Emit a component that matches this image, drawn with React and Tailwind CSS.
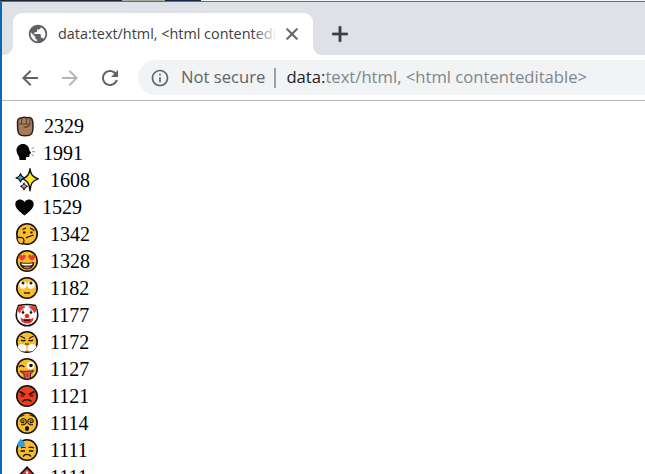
import React from "react";

const Face = ({ fill = "#fbbc2c", children }) => (
  <svg width="24" height="24" viewBox="0 0 24 24" className="shrink-0">
    <circle cx="12" cy="12" r="10.2" fill={fill} stroke="#111" strokeWidth="1.6" />
    {children}
  </svg>
);

const Raw = ({ children }) => (
  <svg width="24" height="24" viewBox="0 0 24 24" className="shrink-0">{children}</svg>
);

const emojis = {
  fist: (
    <Raw>
      <path d="M2.500 8C2.500 5 4.500 3.800 6.500 4 8 3.200 10.500 3.200 12 3.800c2-.7 4-.2 5 1.300.9 1.800 1 4.300 1 7 0 4 .2 5.500-1.300 7.500-1.400 1.800-3.500 2.200-6.700 2.200-3.500 0-5.500-.8-6.500-2.800C2.700 17 2.500 12.500 2.500 8z" fill="#a67c5a" stroke="#2b2118" strokeWidth="1.500" />
      <path d="M6.500 4.500V9.500M11.500 4V9.500M15 4.500V9.500M3.500 10H15C14.500 12 12 13.200 8.500 13.200" fill="none" stroke="#5d4430" strokeWidth="1.100" />
    </Raw>
  ),
  head: (
    <Raw>
      <path d="M1.500 9.500C1.500 5.500 4.500 3 8 3c3.500 0 6 2.500 6.200 5.500 0 1 1.800 2.800 1.800 3.500 0 .7-1.300.9-1.500 1.300.2.900.2 1.700-.3 2.200-.8.800-2.200.4-3 .8-.4.800-.3 1.700-.3 2.700H4.500c0-2-.4-3.500-1.500-5C2 12.500 1.500 11 1.500 9.500z" fill="#050505" />
      <path d="M16.500 8L19 6.300M17 10.700H20M16.500 13.300L19 15" fill="none" stroke="#8d8d96" strokeWidth="1" />
    </Raw>
  ),
  sparkles: (
    <svg width="24" height="24" viewBox="0 0 24 24" className="shrink-0">
      <path d="M15 0.800C15.800 6.500 17.500 9 23.300 10.800 17.500 12.700 15.800 15 15 22.800 14.200 15 12.500 12.700 7.500 10.800 12.500 9 14.200 6.500 15 0.800z" fill="#ffe81f" stroke="#111" strokeWidth="1.400" strokeLinejoin="round" />
      <path d="M5.500 5.500C6 8 7 9 9.500 9.800 7 10.500 6 11.500 5.500 14 5 11.500 4 10.500 1 9.800 4 9 5 8 5.500 5.500z" fill="#2cb5d8" stroke="#111" strokeWidth="1.200" strokeLinejoin="round" />
      <path d="M9 15C9.400 17 10 17.600 12.300 18.300 10 19 9.400 19.700 9 22 8.600 19.700 8 19 5.700 18.300 8 17.600 8.600 17 9 15z" fill="#ea8bbd" stroke="#111" strokeWidth="1.100" strokeLinejoin="round" />
    </svg>
  ),
  heart: (
    <Raw>
      <path d="M9.500 20.500C5 17 .3 13.500.3 9.300.3 6 2.700 4.500 5 4.500 7 4.500 8.700 5.500 9.500 7.200 10.300 5.500 12 4.500 14 4.500 16.300 4.500 18.700 6 18.700 9.300 18.700 13.500 14 17 9.500 20.500z" fill="#050505" />
    </Raw>
  ),
  thinking: (
    <Face>
      <path d="M7.500 7.500L11 6M15 6L19.500 8.500" fill="none" stroke="#111" strokeWidth="1.300" />
      <path d="M8 10.500h2.500M15.500 10.500h2" fill="none" stroke="#111" strokeWidth="1.800" />
      <path d="M11 15.800C13.500 14.500 16 14 18.500 13" fill="none" stroke="#111" strokeWidth="1.300" />
      <path d="M1.800 16C3.500 15 7 15.200 8 16.200 9.300 17.800 9 20.500 7.500 22.200L4.500 21.500C3 20 2 18 1.800 16z" fill="#fbbc2c" stroke="#111" strokeWidth="1.200" />
    </Face>
  ),
  hearts: (
    <Face>
      <path d="M7 11.800C4.500 10 3.200 8.500 3.700 6.800 4.300 5.300 6.300 5.300 7.200 7 8.100 5.300 10.200 5.300 10.700 6.800 11.200 8.500 9.500 10 7 11.800z" fill="#ea3d2f" />
      <path d="M17 11.800C14.500 10 12.800 8.500 13.300 6.800 13.900 5.300 15.900 5.300 16.800 7 17.700 5.300 19.800 5.300 20.300 6.800 20.800 8.500 19.500 10 17 11.800z" fill="#ea3d2f" />
      <path d="M5.300 13.500C8 14.500 16 14.500 18.700 13.500 18.700 17.500 16 20 12 20 8 20 5.300 17.500 5.300 13.500z" fill="#3a1a10" stroke="#111" strokeWidth=".8" />
      <path d="M6.500 14.200C9 14.900 15 14.900 17.500 14.200L17 16C14 16.700 10 16.700 7 16z" fill="#fff" />
      <path d="M8.500 18.500C10 17.300 14 17.300 15.500 18.500 14 19.700 10 19.700 8.500 18.500z" fill="#e8603c" />
    </Face>
  ),
  roll: (
    <Face>
      <circle cx="8" cy="9" r="3.700" fill="#fff" />
      <circle cx="16" cy="9" r="3.700" fill="#fff" />
      <circle cx="8" cy="7" r="1.500" fill="#222" />
      <circle cx="16" cy="7" r="1.500" fill="#222" />
      <path d="M9 17H15" stroke="#111" strokeWidth="1.300" />
    </Face>
  ),
  clown: (
    <Raw>
      <path d="M3.500 2.500C6 2 8.500 1.500 12 1.500s6 .5 8.500 1C22 6 22.800 9 22.800 12c0 6-4.800 10.800-10.800 10.800S1.200 18 1.200 12c0-3 .8-6 2.300-9.500z" fill="#fdfdfd" stroke="#111" strokeWidth="1.500" />
      <path d="M3 3.500C6 2.600 9 2.800 11 4 8 5 6 7 5 10 3 9.500 2 7 3 3.500zM21 3.500C18 2.600 15 2.800 13 4 16 5 18 7 19 10 21 9.500 22 7 21 3.500z" fill="#e03c31" />
      <path d="M8 9V6M16 9V6" stroke="#4fa5dd" strokeWidth="1.200" />
      <circle cx="8" cy="9.500" r="1.300" fill="#111" />
      <circle cx="16" cy="9.500" r="1.300" fill="#111" />
      <circle cx="12" cy="13" r="2.300" fill="#e6312a" />
      <path d="M5.500 14.500C7 16 8.500 16 9.500 15.500 11 16.200 13 16.200 14.500 15.500 15.500 16 17 16 18.500 14.500 18.500 18.500 15.500 20.500 12 20.500 8.500 20.500 5.500 18.500 5.500 14.500z" fill="#e6312a" />
      <path d="M9 17.300H15" stroke="#4a0f0a" strokeWidth="1.500" />
    </Raw>
  ),
  steam: (
    <Face>
      <path d="M5.500 6L10 8.500M18.500 6L14 8.500M6 10C7.500 11.200 9 11.200 10.500 10M13.500 10C15 11.200 16.500 11.200 18 10M10 14H14" fill="none" stroke="#111" strokeWidth="1.200" />
      <path d="M2.500 17C3.500 14.500 6 13.500 8 14.500 10 14.500 11.500 16 11.500 18.500 11.500 19.500 11 20.800 10 21.500 7 22 4 20 2.500 17zM21.500 17C20.500 14.500 18 13.500 16 14.500 14 14.500 12.500 16 12.500 18.500 12.500 19.500 13 20.800 14 21.500 17 22 20 20 21.500 17z" fill="#fff" />
    </Face>
  ),
  wink: (
    <Face>
      <path d="M4 10C5.500 8 7.500 8 9.300 10" fill="none" stroke="#111" strokeWidth="1.400" />
      <circle cx="15.500" cy="8.500" r="3.800" fill="#fff" />
      <circle cx="16" cy="8.500" r="1.800" fill="#111" />
      <path d="M5 14C9 14.500 14 14.500 18.500 13.500 18 15 17 16 15.500 16.700V20C15.500 21.500 13.800 22.500 12 22.300 10 22 9 21 9 19.500V16.500C7 16 5.500 15 5 14z" fill="#e0504a" stroke="#111" strokeWidth=".8" />
      <path d="M12.300 17V20" stroke="#a82a2a" strokeWidth="1" />
    </Face>
  ),
  angry: (
    <Face fill="#e8401c">
      <path d="M4.500 7.500L10 10.500M19.500 7.500L14 10.500" stroke="#111" strokeWidth="1.800" />
      <ellipse cx="7.500" cy="11.500" rx="2" ry="1.500" fill="#8a1a10" />
      <ellipse cx="16.500" cy="11.500" rx="2" ry="1.500" fill="#8a1a10" />
      <path d="M7.500 17.500C9.500 15.300 14.500 15.300 16.500 17.500" fill="none" stroke="#111" strokeWidth="1.500" />
    </Face>
  ),
  dizzy: (
    <Face>
      <path d="M5 5.500L9.500 4M19 5.500L14.500 4" stroke="#111" strokeWidth="1" />
      <path d="M7.500 10c.9-.7 1.800.2 1.300 1.100-.6 1-2.400.7-2.900-.6-.5-1.500 1-3 2.800-2.700 1.900.3 3 2 2.400 3.900-.6 1.700-3 2.600-5 1.800" fill="none" stroke="#111" strokeWidth="1.100" />
      <path d="M16.500 10c-.9-.7-1.800.2-1.300 1.100.6 1 2.400.7 2.900-.6.500-1.500-1-3-2.800-2.700-1.900.3-3 2-2.400 3.900.6 1.700 3 2.600 5 1.800" fill="none" stroke="#111" strokeWidth="1.100" />
      <ellipse cx="12" cy="17.500" rx="2" ry="2.500" fill="#111" />
    </Face>
  ),
  sweat: (
    <Face>
      <path d="M13.500 9.500C15 9 17 9 19 10M6 10C7.500 9 8.500 9 10.500 9.500" fill="none" stroke="#111" strokeWidth="1.200" />
      <path d="M5.500 13H10M14 13H18.500" stroke="#111" strokeWidth="1.500" />
      <path d="M8 18.500C10 15.700 14 15.700 16 18.500" fill="none" stroke="#111" strokeWidth="1.400" />
      <path d="M5.500 0.500C7 2.500 10 4 10 6.300 10 8 8.300 9 6 9 3.800 9 2.300 8 2.300 6.300 2.300 4.300 4.500 3 5.500 .5z" fill="#2e9fe0" />
    </Face>
  ),
  house: (
    <Raw>
      <path d="M12 2L19 9.500H16.500V16H7.500V9.500H5z" fill="#d8362f" stroke="#111" strokeWidth="1.500" />
      <circle cx="12" cy="7.500" r="1.200" fill="#fff" />
    </Raw>
  ),
};

const rows = [
  ["fist", "2329", "ml-[5px]"],
  ["head", "1991", "ml-[4px]"],
  ["sparkles", "1608", "ml-[11px]"],
  ["heart", "1529", "ml-[3px]"],
  ["thinking", "1342", "ml-[11px]"],
  ["hearts", "1328", "ml-[11px]"],
  ["roll", "1182", "ml-[11px]"],
  ["clown", "1177", "ml-[11px]"],
  ["steam", "1172", "ml-[11px]"],
  ["wink", "1127", "ml-[11px]"],
  ["angry", "1121", "ml-[11px]"],
  ["dizzy", "1114", "ml-[11px]"],
  ["sweat", "1111", "ml-[11px]"],
  ["house", "1111", "ml-[11px]"],
];

const Icon = ({ d, size = 24, color = "#5f6368", bold = 0 }) => (
  <svg width={size} height={size} viewBox="0 0 24 24" fill={color} stroke={color} strokeWidth={bold} className="shrink-0">
    <path d={d} />
  </svg>
);

const icons = {
  globe: "M12 2C6.480 2 2 6.480 2 12s4.480 10 10 10 10-4.480 10-10S17.520 2 12 2zm-1 17.930c-3.950-.490-7-3.850-7-7.930 0-.620.080-1.210.210-1.790L9 15v1c0 1.100.9 2 2 2v1.930zm6.900-2.540c-.260-.810-1-1.390-1.900-1.390h-1v-3c0-.550-.450-1-1-1H8v-2h2c.550 0 1-.450 1-1V7h2c1.100 0 2-.9 2-2v-.410c2.930 1.190 5 4.060 5 7.410 0 2.080-.8 3.970-2.100 5.390z",
  close: "M19 6.410L17.590 5 12 10.590 6.410 5 5 6.410 10.590 12 5 17.590 6.410 19 12 13.410 17.590 19 19 17.590 13.410 12z",
  plus: "M19 13h-6v6h-2v-6H5v-2h6V5h2v6h6v2z",
  back: "M20 11H7.830l5.590-5.590L12 4l-8 8 8 8 1.410-1.410L7.830 13H20v-2z",
  forward: "M12 4l-1.410 1.410L16.170 11H4v2h12.170l-5.580 5.590L12 20l8-8z",
  reload: "M17.650 6.350C16.200 4.900 14.210 4 12 4c-4.420 0-7.990 3.580-7.990 8s3.570 8 7.990 8c3.730 0 6.840-2.550 7.730-6h-2.080c-.820 2.330-3.040 4-5.650 4-3.310 0-6-2.690-6-6s2.690-6 6-6c1.660 0 3.140.690 4.220 1.780L13 11h7V4l-2.350 2.350z",
  info: "M11 7h2v2h-2zm0 4h2v6h-2zm1-9C6.480 2 2 6.480 2 12s4.480 10 10 10 10-4.480 10-10S17.520 2 12 2zm0 18c-4.410 0-8-3.590-8-8s3.590-8 8-8 8 3.590 8 8-3.590 8-8 8z",
};

export default function App() {
  return (
    <div className="flex h-[474px] w-[645px] flex-col overflow-hidden bg-white font-['Open_Sans',sans-serif]">
      <div className="flex h-[1px] shrink-0">
        <div className="w-[122px] bg-[#1c2430]" />
        <div className="w-[43px] bg-[#a8a8a4]" />
        <div className="w-[36px] bg-[#10253f]" />
        <div className="flex-1 bg-[#f4f6f8]" />
      </div>
      <div className="h-[1px] shrink-0 bg-[#2b7cc6]" />
      <div className="flex min-h-0 flex-1">
        <div className="w-[2px] shrink-0 bg-[#0a68b4]" />
        <div className="flex min-w-0 flex-1 flex-col">
          <div className="flex h-[53px] shrink-0 items-end bg-[#dee1e6] pl-[11px]">
            <div className="relative flex h-[42px] w-[300px] shrink-0 items-center rounded-t-[9px] bg-white pl-[14px]">
              <div className="absolute bottom-0 left-[-9px] h-[9px] w-[9px] bg-white">
                <div className="h-full w-full rounded-br-[9px] bg-[#dee1e6]" />
              </div>
              <div className="absolute bottom-0 right-[-9px] h-[9px] w-[9px] bg-white">
                <div className="h-full w-full rounded-bl-[9px] bg-[#dee1e6]" />
              </div>
              <Icon d={icons.globe} size={22} />
              <div className="relative ml-[9px] w-[219px] shrink-0 overflow-hidden whitespace-nowrap text-[14.400px] text-[#3c4043]">
                data:text/html, &lt;html contenteditable&gt;
                <div className="absolute inset-y-0 right-0 w-[24px] bg-gradient-to-l from-white to-transparent" />
              </div>
              <div className="ml-[5px]"><Icon d={icons.close} size={20} bold={0.7} /></div>
              <div className="absolute left-[314px]"><Icon d={icons.plus} size={26} color="#3c4043" bold={0.6} /></div>
            </div>
          </div>
          <div className="flex h-[46px] shrink-0 items-center border-b border-[#b8b8b8]">
            <div className="ml-[16px]"><Icon d={icons.back} size={24} /></div>
            <div className="ml-[16px]"><Icon d={icons.forward} size={24} color="#b4b7ba" /></div>
            <div className="ml-[16px]"><Icon d={icons.reload} size={24} /></div>
            <div className="ml-[16px] flex h-[35px] flex-1 items-center rounded-l-full bg-[#f1f3f4] pl-[12px] text-[16.650px] whitespace-nowrap">
              <Icon d={icons.info} size={20} />
              <span className="ml-[11px] text-[#5f6368]">Not secure</span>
              <div className="ml-[9px] h-[20px] w-[2px] bg-[#9aa0a6]" />
              <span className="ml-[10px] text-[#202124]">data:</span>
              <span className="text-[#80868b]">text/html, &lt;html contenteditable&gt;</span>
            </div>
          </div>
          <div className="flex min-h-0 flex-1 flex-col overflow-hidden pl-[13px] pt-[11px] font-['Liberation_Serif',serif] text-[20px] text-black">
            {rows.map(([k, n, ml], i) => (
              <div key={i} className="flex h-[27px] shrink-0 items-center">
                {emojis[k]}
                <span className={ml}>{n}</span>
              </div>
            ))}
          </div>
        </div>
      </div>
    </div>
  );
}
